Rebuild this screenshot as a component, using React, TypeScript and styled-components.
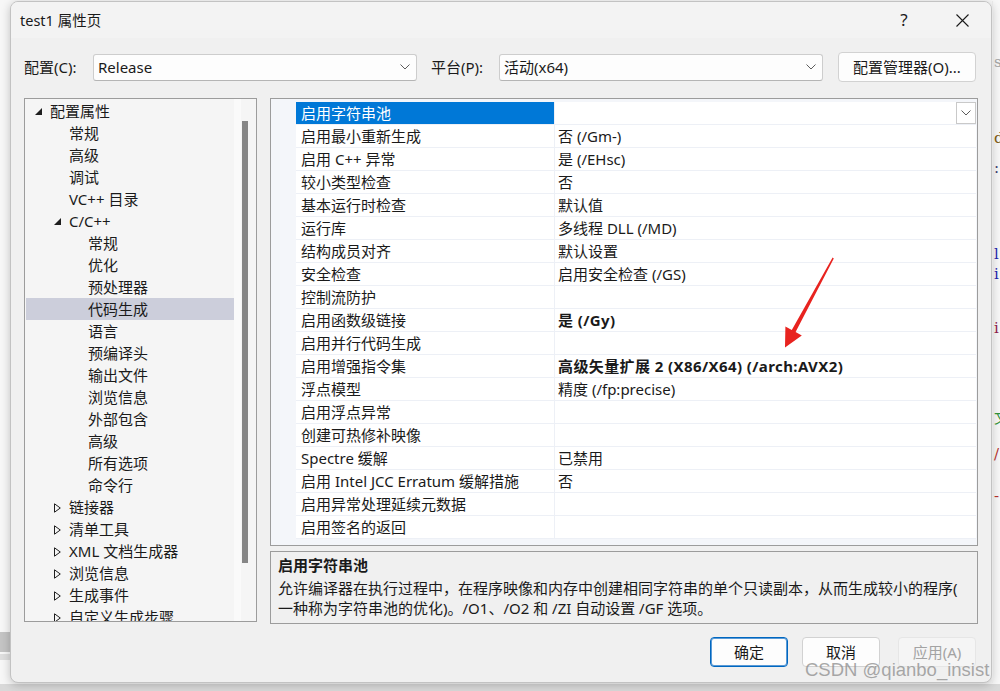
import React from "react";
import styled, { createGlobalStyle } from "styled-components";

const GlobalStyle = createGlobalStyle`
  html, body {
    margin: 0;
    padding: 0;
  }
  body {
    width: 1000px;
    height: 691px;
    overflow: hidden;
    background: #f7f7f7;
    font-family: "Noto Sans", "Noto Sans CJK SC", sans-serif;
    color: #1a1a1a;
  }
`;

type TreeItem = {
  label: string;
  level: number;
  twisty?: "open" | "closed";
  selected?: boolean;
};

const treeItems: TreeItem[] = [
  { label: "配置属性", level: 0, twisty: "open" },
  { label: "常规", level: 1 },
  { label: "高级", level: 1 },
  { label: "调试", level: 1 },
  { label: "VC++ 目录", level: 1 },
  { label: "C/C++", level: 1, twisty: "open" },
  { label: "常规", level: 2 },
  { label: "优化", level: 2 },
  { label: "预处理器", level: 2 },
  { label: "代码生成", level: 2, selected: true },
  { label: "语言", level: 2 },
  { label: "预编译头", level: 2 },
  { label: "输出文件", level: 2 },
  { label: "浏览信息", level: 2 },
  { label: "外部包含", level: 2 },
  { label: "高级", level: 2 },
  { label: "所有选项", level: 2 },
  { label: "命令行", level: 2 },
  { label: "链接器", level: 1, twisty: "closed" },
  { label: "清单工具", level: 1, twisty: "closed" },
  { label: "XML 文档生成器", level: 1, twisty: "closed" },
  { label: "浏览信息", level: 1, twisty: "closed" },
  { label: "生成事件", level: 1, twisty: "closed" },
  { label: "自定义生成步骤", level: 1, twisty: "closed" },
];

type Prop = { name: string; value?: string; bold?: boolean; selected?: boolean };

const properties: Prop[] = [
  { name: "启用字符串池", selected: true },
  { name: "启用最小重新生成", value: "否 (/Gm-)" },
  { name: "启用 C++ 异常", value: "是 (/EHsc)" },
  { name: "较小类型检查", value: "否" },
  { name: "基本运行时检查", value: "默认值" },
  { name: "运行库", value: "多线程 DLL (/MD)" },
  { name: "结构成员对齐", value: "默认设置" },
  { name: "安全检查", value: "启用安全检查 (/GS)" },
  { name: "控制流防护" },
  { name: "启用函数级链接", value: "是 (/Gy)", bold: true },
  { name: "启用并行代码生成" },
  { name: "启用增强指令集", value: "高级矢量扩展 2 (X86/X64) (/arch:AVX2)", bold: true },
  { name: "浮点模型", value: "精度 (/fp:precise)" },
  { name: "启用浮点异常" },
  { name: "创建可热修补映像" },
  { name: "Spectre 缓解", value: "已禁用" },
  { name: "启用 Intel JCC Erratum 缓解措施", value: "否" },
  { name: "启用异常处理延续元数据" },
  { name: "启用签名的返回" },
];

// fragments of the code editor peeking out behind the dialog
const codeGlyphs = [
  { text: "s", top: 52, color: "#a0a0a0" },
  { text: "d", top: 58, color: "#7b5a12" },
  { text: ":", top: 12, color: "#3a3a6a" },
  { text: "l", top: 68, color: "#1f1fa8" },
  { text: "i", top: 2, color: "#1f1fa8" },
  { text: "i", top: 36, color: "#8b1a4a" },
  { text: "文", top: 72, color: "#2f8f3a" },
  { text: "/", top: 18, color: "#b0302a" },
  { text: "-", top: 24, color: "#b0302a" },
];

const Chevron = () => (
  <svg width="10" height="6" viewBox="0 0 10 6">
    <polyline points="0.5,0.5 5,5 9.5,0.5" fill="none" stroke="#5c5c5c" strokeWidth="1" />
  </svg>
);

const Twisty = ({ kind }: { kind?: "open" | "closed" }) => (
  <TwistyBox>
    {kind === "open" && (
      <svg width="7" height="7" viewBox="0 0 7 7">
        <polygon points="7,0 7,7 0,7" fill="#1e1e1e" />
      </svg>
    )}
    {kind === "closed" && (
      <svg width="7" height="10" viewBox="0 0 7 10">
        <polygon points="0.5,0.8 6.3,5 0.5,9.2" fill="none" stroke="#1e1e1e" strokeWidth="1" />
      </svg>
    )}
  </TwistyBox>
);

const App = () => {
  return (
    <Stage>
      <GlobalStyle />
      <LeftStrip>
        <StripBand $height={20} $color="#c4c4c4" />
        <StripBand $height={6} $color="#dedede" />
      </LeftStrip>
      <Dialog>
        <TitleBar>
          <TitleText>test1 属性页</TitleText>
          <CaptionButtons>
            <CaptionButton>?</CaptionButton>
            <CaptionButton>
              <svg width="13" height="13" viewBox="0 0 13 13">
                <path d="M0.5 0.5 L12.5 12.5 M12.5 0.5 L0.5 12.5" stroke="#1a1a1a" strokeWidth="1.1" />
              </svg>
            </CaptionButton>
          </CaptionButtons>
        </TitleBar>

        <ConfigRow>
          <FieldLabel $width={69}>配置(C):</FieldLabel>
          <Combo>
            <span>Release</span>
            <Chevron />
          </Combo>
          <FieldLabel $width={68} $gap={14}>
            平台(P):
          </FieldLabel>
          <Combo>
            <span>活动(x64)</span>
            <Chevron />
          </Combo>
          <ManagerButton>配置管理器(O)...</ManagerButton>
        </ConfigRow>

        <Main>
          <TreePanel>
            <TreeList>
              {treeItems.map((item, i) => (
                <TreeRow key={i} $level={item.level} $selected={!!item.selected}>
                  <Twisty kind={item.twisty} />
                  <span>{item.label}</span>
                </TreeRow>
              ))}
            </TreeList>
            <TreeScroll>
              <ScrollThumb />
            </TreeScroll>
          </TreePanel>

          <RightColumn>
            <PropGrid>
              {properties.map((p, i) => (
                <PropRow key={i}>
                  <NameCell $selected={!!p.selected}>{p.name}</NameCell>
                  <ValueCell $bold={!!p.bold}>
                    <span>{p.value}</span>
                    {p.selected && (
                      <DropButton>
                        <Chevron />
                      </DropButton>
                    )}
                  </ValueCell>
                </PropRow>
              ))}
            </PropGrid>
            <Description>
              <DescTitle>启用字符串池</DescTitle>
              <DescLine>
                允许编译器在执行过程中，在程序映像和内存中创建相同字符串的单个只读副本，从而生成较小的程序(
              </DescLine>
              <DescLine>一种称为字符串池的优化)。/O1、/O2 和 /ZI 自动设置 /GF 选项。</DescLine>
            </Description>
          </RightColumn>
        </Main>

        <Footer>
          <DialogButton $variant="default">确定</DialogButton>
          <DialogButton>取消</DialogButton>
          <DialogButton $variant="disabled">应用(A)</DialogButton>
        </Footer>
      </Dialog>

      <EditorStrip>
        {codeGlyphs.map((g, i) => (
          <CodeGlyph key={i} $top={g.top} $color={g.color}>
            {g.text}
          </CodeGlyph>
        ))}
      </EditorStrip>

      <Arrow width="60" height="95" viewBox="0 0 60 95">
        <polygon
          points="52.6,2.6 53.8,3.4 15.6,77 21.8,80.6 5,92.5 5.4,71.4 11.8,75"
          fill="#e8231f"
        />
      </Arrow>
      <Watermark>CSDN @qianbo_insist</Watermark>
    </Stage>
  );
};

export default App;

const Stage = styled.div`
  position: relative;
  display: flex;
  align-items: flex-start;
  width: 1000px;
  height: 691px;
  padding-top: 1px;
  box-sizing: border-box;
  overflow: hidden;
  background: linear-gradient(to bottom, #f7f7f7 0, #f7f7f7 684px, #d9d9d9 684px);
`;

const LeftStrip = styled.div`
  display: flex;
  flex-direction: column;
  width: 10px;
  height: 690px;
  padding-top: 631px;
  box-sizing: border-box;
  gap: 2px;
`;

const StripBand = styled.div<{ $height: number; $color: string }>`
  height: ${(p) => p.$height}px;
  background: ${(p) => p.$color};
`;

const Dialog = styled.div`
  display: flex;
  flex-direction: column;
  width: 982px;
  height: 682px;
  box-sizing: border-box;
  background: #f0f0f0;
  border: 1px solid #c2c2c2;
  border-radius: 8px;
  box-shadow: 0 2px 10px rgba(0, 0, 0, 0.22);
  overflow: hidden;
  font-size: 15px;
  line-height: 20px;
`;

const TitleBar = styled.div`
  display: flex;
  align-items: center;
  height: 36px;
  padding-left: 9px;
  background: #f3f3f3;
  font-size: 14.5px;
`;

const TitleText = styled.div`
  flex: 1;
`;

const CaptionButtons = styled.div`
  display: flex;
  gap: 12px;
  padding-right: 6px;
`;

const CaptionButton = styled.div`
  display: flex;
  align-items: center;
  justify-content: center;
  width: 46px;
  height: 36px;
  font-size: 17px;
  color: #1a1a1a;
`;

const ConfigRow = styled.div`
  display: flex;
  align-items: center;
  height: 30px;
  margin-top: 14px;
  padding: 0 15px 0 13px;
`;

const FieldLabel = styled.div<{ $width: number; $gap?: number }>`
  width: ${(p) => p.$width}px;
  margin-left: ${(p) => p.$gap ?? 0}px;
  white-space: nowrap;
`;

const Combo = styled.div`
  display: flex;
  align-items: center;
  justify-content: space-between;
  width: 324px;
  height: 27px;
  box-sizing: border-box;
  padding: 0 6px 0 4px;
  background: #fdfdfd;
  border: 1px solid #cdcdcd;
  border-bottom-color: #b5b5b5;
  border-radius: 3px;
`;

const ManagerButton = styled.div`
  display: flex;
  align-items: center;
  justify-content: center;
  width: 138px;
  height: 30px;
  margin-left: 15px;
  box-sizing: border-box;
  background: #fdfdfd;
  border: 1px solid #d2d2d2;
  border-radius: 4px;
`;

const Main = styled.div`
  display: flex;
  align-items: flex-start;
  gap: 13px;
  margin-top: 16px;
  padding: 0 13px;
`;

const TreePanel = styled.div`
  display: flex;
  width: 233px;
  height: 524px;
  box-sizing: border-box;
  background: #f5f5f5;
  border: 1px solid #9c9c9c;
  overflow: hidden;
`;

const TreeList = styled.div`
  width: 208px;
  padding: 1px 0 0 1px;
`;

const TreeRow = styled.div<{ $level: number; $selected: boolean }>`
  display: flex;
  align-items: center;
  height: 22px;
  padding-left: ${(p) => 9 + p.$level * 19}px;
  background: ${(p) => (p.$selected ? "#cccedb" : "transparent")};
  white-space: nowrap;
`;

const TwistyBox = styled.div`
  display: flex;
  align-items: center;
  width: 15px;
  height: 22px;
  padding-top: 1px;
  box-sizing: border-box;
`;

const TreeScroll = styled.div`
  display: flex;
  justify-content: center;
  flex: 1;
  background: linear-gradient(to right, #fafafa 0, #fafafa 7px, #f5f5f5 7px);
`;

const ScrollThumb = styled.div`
  width: 6px;
  height: 442px;
  margin-top: 22px;
  background: #868686;
`;

const RightColumn = styled.div`
  display: flex;
  flex-direction: column;
  gap: 5px;
  width: 708px;
`;

const PropGrid = styled.div`
  height: 448px;
  box-sizing: border-box;
  padding: 3px 1px 0 25px;
  background: #f4f6fa;
  border: 1px solid #9c9c9c;
`;

const PropRow = styled.div`
  display: flex;
  height: 23px;
  box-sizing: border-box;
  background: #ffffff;
  border-bottom: 1px solid #edf0f6;
`;

const NameCell = styled.div<{ $selected: boolean }>`
  width: 259px;
  box-sizing: border-box;
  padding-left: 5px;
  line-height: 22px;
  white-space: nowrap;
  color: ${(p) => (p.$selected ? "#ffffff" : "#1a1a1a")};
  background: ${(p) => (p.$selected ? "#0078d7" : "transparent")};
  border-right: 1px solid #edf0f6;
`;

const ValueCell = styled.div<{ $bold: boolean }>`
  display: flex;
  justify-content: space-between;
  flex: 1;
  padding-left: 3px;
  line-height: 22px;
  white-space: nowrap;
  font-weight: ${(p) => (p.$bold ? 700 : 400)};
  letter-spacing: ${(p) => (p.$bold ? "0.4px" : "0")};
`;

const DropButton = styled.div`
  display: flex;
  align-items: center;
  justify-content: center;
  width: 20px;
  height: 22px;
  box-sizing: border-box;
  background: #ffffff;
  border: 1px solid #c9c9c9;
`;

const Description = styled.div`
  height: 73px;
  box-sizing: border-box;
  padding: 3px 7px 0 7px;
  border: 1px solid #9c9c9c;
`;

const DescTitle = styled.div`
  font-weight: 700;
`;

const DescLine = styled.div`
  white-space: nowrap;
  ${DescTitle} + & {
    margin-top: 3px;
  }
`;

const Footer = styled.div`
  display: flex;
  justify-content: flex-end;
  gap: 14px;
  margin-top: 13px;
  padding-right: 15px;
`;

const DialogButton = styled.div<{ $variant?: "default" | "disabled" }>`
  display: flex;
  align-items: center;
  justify-content: center;
  width: 78px;
  height: 30px;
  box-sizing: border-box;
  margin-left: ${(p) => (p.$variant === "disabled" ? 4 : 0)}px;
  border-radius: 4px;
  background: ${(p) => (p.$variant === "disabled" ? "#f5f5f5" : "#fdfdfd")};
  color: ${(p) => (p.$variant === "disabled" ? "#a3a3a3" : "#1a1a1a")};
  border: ${(p) =>
    p.$variant === "default"
      ? "1px solid #0067c0"
      : p.$variant === "disabled"
        ? "1px solid #e6e6e6"
        : "1px solid #d2d2d2"};
  box-shadow: ${(p) => (p.$variant === "default" ? "inset 0 0 0 1px #5a9ad6" : "none")};
`;

const EditorStrip = styled.div`
  display: flex;
  flex-direction: column;
  flex: 1;
  height: 682px;
  border-left: 1px solid #e6e6e6;
  overflow: hidden;
  font-family: "DejaVu Serif", "Noto Sans CJK SC", serif;
  font-size: 15px;
  line-height: 18px;
`;

const CodeGlyph = styled.div<{ $top: number; $color: string }>`
  margin-top: ${(p) => p.$top}px;
  padding-left: 1px;
  white-space: nowrap;
  color: ${(p) => p.$color};
`;

const Arrow = styled.svg`
  position: absolute;
  left: 780px;
  top: 255px;
`;

const Watermark = styled.div`
  position: absolute;
  left: 805px;
  top: 659px;
  font-family: "Liberation Sans", "Noto Sans", sans-serif;
  font-size: 18.5px;
  line-height: 22px;
  color: rgba(140, 140, 140, 0.75);
  white-space: nowrap;
`;
